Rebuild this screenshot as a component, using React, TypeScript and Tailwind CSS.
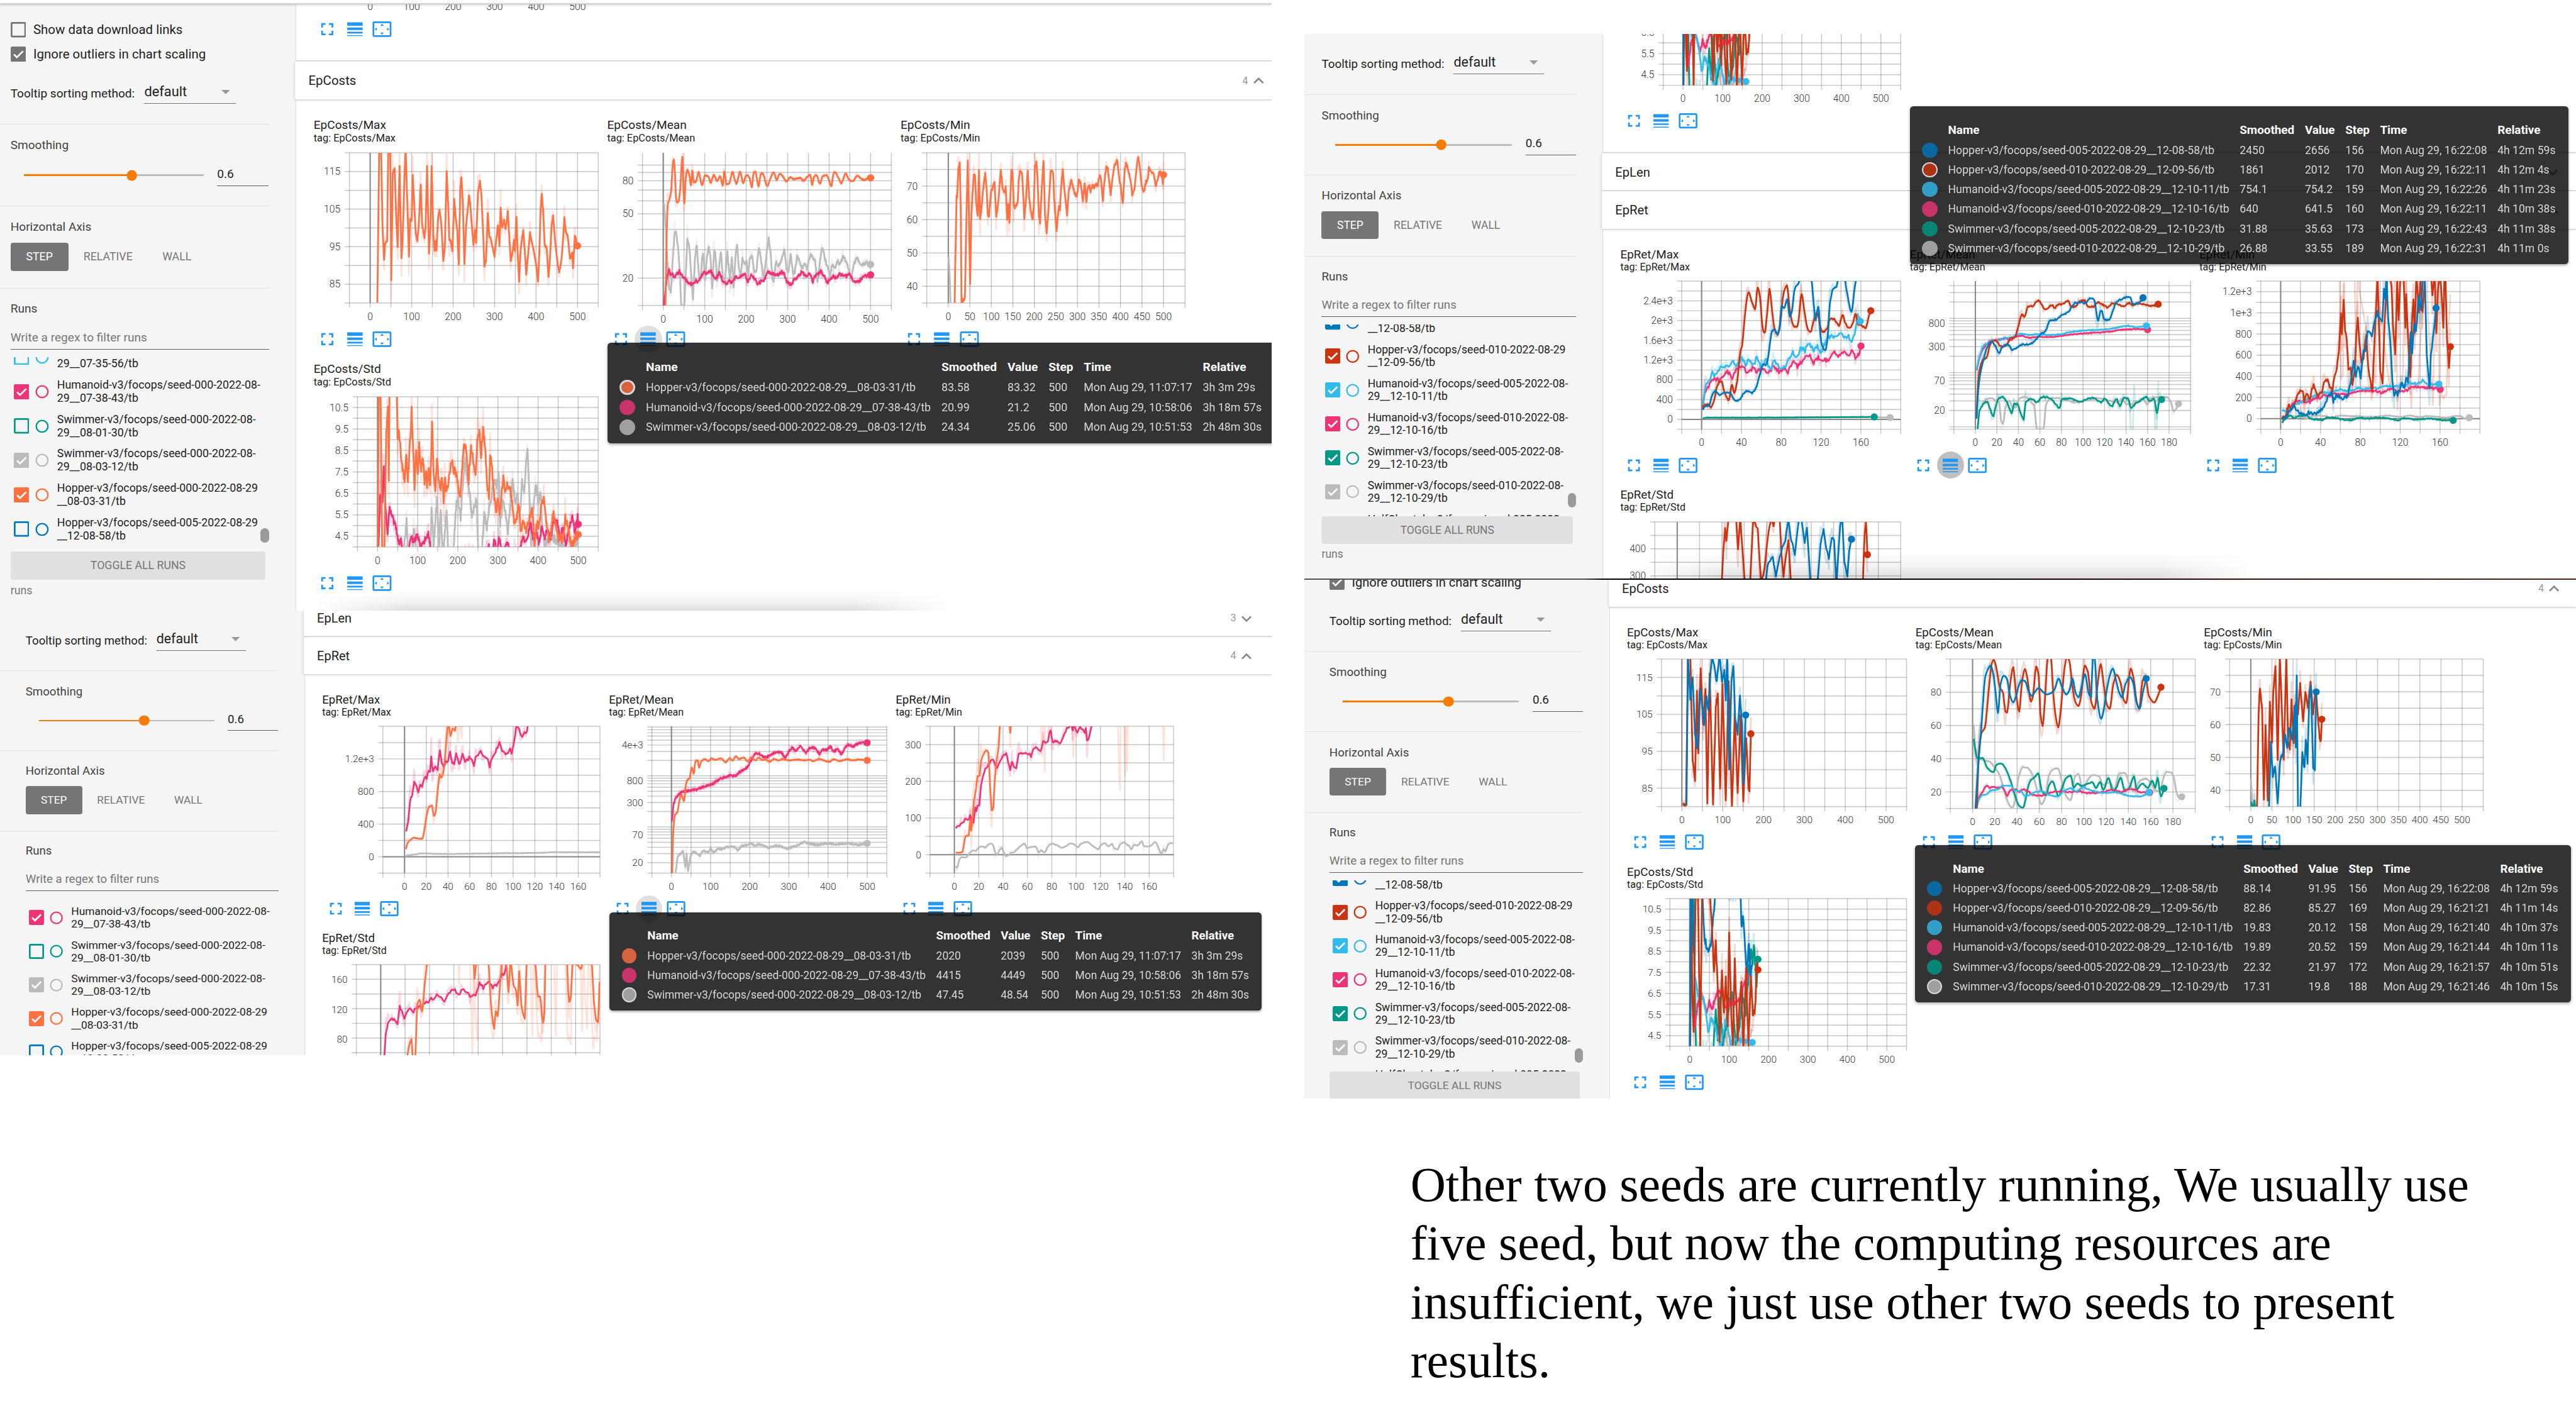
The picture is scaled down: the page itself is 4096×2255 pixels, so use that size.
import React from "react";

type Frame = [number, number, number, number];

interface Line {
  c: string;
  d: string;
  n?: number;
  dot?: boolean;
  raw?: boolean;
}

interface ChartSpec {
  title: string;
  left: number;
  bottom?: number;
  frame: Frame;
  x: [number, number];
  xGrid: number;
  xLabel: number;
  y: [number, number];
  yGrid?: number;
  log?: boolean;
  yLabels: number[];
  zero?: boolean;
  lines: Line[];
  active?: "soft" | "strong";
}

const BLUE = "#0077bb";
const RED = "#cc3311";
const CYAN = "#33bbee";
const PINK = "#ee3377";
const TEAL = "#009988";
const GREY = "#bbbbbb";
const ORANGE = "#ff7043";

const RIGHT = 331.6;

function makeRandom(seed: number) {
  let s = seed;
  return () => {
    s = (s * 1664525 + 1013904223) % 4294967296;
    return s / 4294967296 - 0.5;
  };
}

function parse(d: string): [number, number][] {
  return d.split(" ").map((p) => {
    const [x, y] = p.split(",");
    return [Number(x), Number(y)] as [number, number];
  });
}

// Monotone tangents: flat at local extremes, harmonic mean of the slopes elsewhere.
function tangents(knots: [number, number][]) {
  const slope = knots.slice(1).map(([x, y], i) => (y - knots[i][1]) / Math.max(0.5, x - knots[i][0]));
  return knots.map((_, i) => {
    if (i === 0) return slope[0];
    if (i === knots.length - 1) return slope[i - 1];
    const a = slope[i - 1];
    const b = slope[i];
    return a * b <= 0 ? 0 : (2 * a * b) / (a + b);
  });
}

// Resamples the knots once per step and derives the unsmoothed values from them.
function build(line: Line, frame: Frame, step: number) {
  const knots = parse(line.d);
  const noise = line.n ?? 0;
  const curved = noise <= 2 && !line.raw;
  const m = tangents(knots);
  const rnd = makeRandom(line.d.length * 977 + 13);
  const smooth: [number, number][] = [];
  for (let i = 0; i < knots.length - 1; i++) {
    const [x0, y0] = knots[i];
    const [x1, y1] = knots[i + 1];
    const h = x1 - x0;
    const count = Math.max(1, Math.round(h / (curved ? step * 0.8 : step)));
    for (let k = 0; k < count; k++) {
      const t = k / count;
      const base = curved
        ? (2 * t ** 3 - 3 * t ** 2 + 1) * y0 +
          (t ** 3 - 2 * t ** 2 + t) * h * m[i] +
          (3 * t ** 2 - 2 * t ** 3) * y1 +
          (t ** 3 - t ** 2) * h * m[i + 1]
        : y0 + (y1 - y0) * t;
      smooth.push([x0 + h * t, base + rnd() * noise * 2]);
    }
  }
  smooth.push(knots[knots.length - 1]);
  const raw = smooth.map(([x, y], i) => {
    const prev = i > 0 ? smooth[i - 1][1] : y;
    const delta = Math.max(-frame[3] * 0.12, Math.min(frame[3] * 0.12, 1.5 * (y - prev)));
    return [x, y + delta + rnd() * noise * 2] as [number, number];
  });
  return { smooth, raw };
}

function fmt(v: number) {
  return v >= 1000 ? `${v / 1000}e+3` : String(v);
}

const fullscreenPath =
  "M7 14H5v5h5v-2H7v-3zm-2-4h2V7h3V5H5v5zm12 7h-3v2h5v-5h-2v3zM14 5v2h3v3h2V5h-5z";
const weightPath = "M3 17h18v-2H3v2zm0 3h18v-1H3v1zm0-7h18v-3H3v3zm0-9v4h18V4H3z";
const overscanPath =
  "M12.01 5.5L10 8h4l-1.99-2.5zM18 10v4l2.5-1.99L18 10zM6 10l-2.5 2.01L6 14v-4zm8 6h-4l2.01 2.5L14 16zm7-13H3c-1.1 0-2 .9-2 2v14c0 1.1.9 2 2 2h18c1.1 0 2-.9 2-2V5c0-1.1-.9-2-2-2zm0 16.01H3V4.99h18v14.02z";

function Icon({ d }: { d: string }) {
  return (
    <svg viewBox="0 0 24 24" className="size-6 fill-[#2196f3]">
      <path d={d} />
    </svg>
  );
}

function Plot({ spec }: { spec: ChartSpec }) {
  const bottom = spec.bottom ?? 175.1;
  const { left, frame } = spec;
  const width = RIGHT - left;
  const px = (v: number) => left + ((v - spec.x[0]) / (spec.x[1] - spec.x[0])) * width;
  const f = (v: number) => (spec.log ? Math.log(v) : v);
  const py = (v: number) =>
    bottom - ((f(v) - f(spec.y[0])) / (f(spec.y[1]) - f(spec.y[0]))) * bottom;

  const xs: number[] = [];
  for (let v = spec.x[0]; v <= spec.x[1]; v += spec.xGrid) xs.push(v);
  const ys: number[] = [];
  if (spec.log) {
    for (let decade = 1; decade <= 1000; decade *= 10)
      for (let k = 1; k < 10; k++) {
        const v = k * decade;
        if (v > spec.y[0] && v <= spec.y[1]) ys.push(v);
      }
    ys.push(spec.y[0]);
  } else if (spec.yGrid) {
    for (let v = spec.y[0]; v <= spec.y[1] + 0.001; v += spec.yGrid) ys.push(v);
  }
  const xl: number[] = [];
  for (let v = 0; v < spec.x[1]; v += spec.xLabel) xl.push(v);

  const step = frame[2] / (spec.x[1] - spec.x[0]);
  const tx = (x: number) => ((x - frame[0]) / frame[2]) * width;
  const ty = (y: number) => ((y - frame[1]) / frame[3]) * bottom;
  const toPoints = (pts: [number, number][]) =>
    pts.map(([x, y]) => `${tx(x).toFixed(1)},${ty(y).toFixed(1)}`).join(" ");
  const built = spec.lines.map((l) => ({ l, ...build(l, frame, step) }));

  return (
    <svg width={342} height={205.4} className="block overflow-visible">
      {ys.map((v) => (
        <line key={`y${v}`} x1={left - 5.5} x2={RIGHT} y1={py(v)} y2={py(v)} stroke="#444" strokeOpacity={0.3} strokeWidth={1.1} />
      ))}
      {xs.map((v) => (
        <line key={`x${v}`} x1={px(v)} x2={px(v)} y1={0} y2={bottom + 5.4} stroke="#444" strokeOpacity={0.3} strokeWidth={1.1} />
      ))}
      <line x1={px(0)} x2={px(0)} y1={0} y2={bottom} stroke="#888" strokeWidth={1.5} />
      {spec.zero && <line x1={left} x2={RIGHT} y1={py(0)} y2={py(0)} stroke="#888" strokeWidth={1.5} />}
      <svg x={left} y={0} width={width} height={bottom}>
        {built.map(({ l, raw }, i) => (
          <polyline key={`r${i}`} points={toPoints(raw)} fill="none" stroke={l.c} strokeOpacity={0.2} strokeWidth={2} />
        ))}
        {built
          .filter(({ l }) => !l.raw)
          .map(({ l, smooth }, i) => (
            <polyline key={`s${i}`} points={toPoints(smooth)} fill="none" stroke={l.c} strokeWidth={2} strokeLinejoin="round" />
          ))}
      </svg>
      {built
        .filter(({ l }) => l.dot)
        .map(({ l, smooth }, i) => {
          const [x, y] = smooth[smooth.length - 1];
          return <circle key={i} cx={left + tx(x)} cy={ty(y)} r={4.2} fill={l.c} />;
        })}
      <g className="fill-[#333] font-light text-[11.6px]">
        {spec.yLabels.map((v) => (
          <text key={v} x={left - 10.5} y={py(v) + 4} textAnchor="end">
            {fmt(v)}
          </text>
        ))}
        {xl.map((v) => (
          <text key={v} x={px(v)} y={bottom + 19.8} textAnchor="middle">
            {v}
          </text>
        ))}
      </g>
    </svg>
  );
}

function Card({ spec }: { spec: ChartSpec }) {
  return (
    <div className="h-[284.4px] w-[342.3px] whitespace-nowrap text-[#212121]">
      <div className="flex h-[61.3px] flex-col pt-[20.6px]">
        <span className="text-[14px] leading-[18px]">{spec.title}</span>
        <span className="text-[12px] leading-[12px]">tag: {spec.title}</span>
      </div>
      <Plot spec={spec} />
      <div className="flex gap-2 pl-1">
        <Icon d={fullscreenPath} />
        <div
          className={
            spec.active === "soft"
              ? "-m-1 rounded-full bg-black/12 p-1"
              : spec.active === "strong"
                ? "-m-1 rounded-full bg-black/25 p-1"
                : ""
          }
        >
          <Icon d={weightPath} />
        </div>
        <Icon d={overscanPath} />
      </div>
    </div>
  );
}

function Body({ specs, className = "" }: { specs: ChartSpec[]; className?: string }) {
  return (
    <div className={`flex shrink-0 flex-col overflow-hidden border-l border-[#dcdcdc] bg-white ${className}`}>
      <div className="grid shrink-0 grid-cols-[repeat(3,342.1px)] pb-[30.8px] pl-[20.3px]">
        {specs.map((s) => (
          <Card key={s.title} spec={s} />
        ))}
      </div>
    </div>
  );
}

function Header({ name, count, open, className }: { name: string; count: number; open?: boolean; className: string }) {
  return (
    <div
      className={`relative z-10 -ml-px flex shrink-0 items-end justify-between border-b border-[#d6d6d6] bg-white pb-[11.6px] pl-4 shadow-[0_0_3px_rgba(0,0,0,0.22)] ${className}`}
    >
      <span className="text-[15px] leading-5 text-[#212121]">{name}</span>
      <span className="flex items-center text-[12px] leading-5 text-[#999]">
        {count}
        <svg viewBox="0 0 24 24" className="-my-1 size-6 fill-[#888]">
          <path d={open ? "M12 8l-6 6 1.41 1.41L12 10.83l4.59 4.58L18 14z" : "M16.59 8.59L12 13.17 7.41 8.59 6 10l6 6 6-6z"} />
        </svg>
      </span>
    </div>
  );
}

type Row = [string, string, string, string, string, string, string];

function Tooltip({ rows, near, className }: { rows: Row[]; near: number; className: string }) {
  const grid = "grid grid-cols-[30.6px_344.6px_77px_47.8px_41px_138.8px_70px] items-center pl-[14.4px]";
  return (
    <div
      className={`absolute z-20 w-[778px] rounded-[4px] bg-black/80 pt-[17px] pb-[7.1px] whitespace-nowrap text-white shadow-[0_1px_3px_rgba(0,0,0,0.35)] ${className}`}
    >
      <div className={`${grid} h-[23.3px] text-[14px] font-bold`}>
        <span />
        <span>Name</span>
        <span>Smoothed</span>
        <span>Value</span>
        <span>Step</span>
        <span>Time</span>
        <span>Relative</span>
      </div>
      {rows.map(([color, ...cells], i) => (
        <div key={i} className={`${grid} h-[23.2px] text-[13.08px] leading-[18px] opacity-80`}>
          <span
            className={`size-[18px] rounded-full ${i === near ? "border-[2.2px] border-white" : ""}`}
            style={{ backgroundColor: color }}
          />
          {cells.map((c, k) => (
            <span key={k}>{c}</span>
          ))}
        </div>
      ))}
    </div>
  );
}

function Check({ color, on }: { color: string; on?: boolean }) {
  return (
    <svg viewBox="0 0 18 18" className="size-[18px] shrink-0">
      <rect x="1" y="1" width="16" height="16" rx="1" fill={on ? color : "none"} stroke={color} strokeWidth="2" />
      {on && <path d="M3.8 9.2l3.4 3.4 7.2-7.2" fill="none" stroke="#fff" strokeWidth="2" />}
    </svg>
  );
}

interface Run {
  color: string;
  on: boolean;
  a: string;
  b: string;
}

function Sidebar({
  runs,
  width,
  pad,
  top,
  listOffset,
  thumb = true,
}: {
  runs: Run[];
  width: string;
  pad: string;
  top: string;
  listOffset: string;
  thumb?: boolean;
}) {
  return (
    <div className={`shrink-0 bg-[#f5f5f5] pr-[31px] text-[#212121] ${width}`}>
      <div className={`flex flex-col justify-end overflow-hidden border-b border-[#e0e0e0] ${pad} ${top}`}>
        <div className="mb-[10.3px] flex shrink-0 items-center gap-[8.6px] text-[15px] leading-[18px]">
          <Check color="#757575" />
          Show data download links
        </div>
        <div className="mb-[19.2px] flex shrink-0 items-center gap-[8.6px] text-[15px] leading-[18px]">
          <Check color="#757575" on />
          Ignore outliers in chart scaling
        </div>
        <div className="mb-[23.4px] flex shrink-0 items-end gap-[11px]">
          <span className="w-[145px] pb-[3.9px] text-[14px] leading-[16px] whitespace-nowrap">Tooltip sorting method:</span>
          <div className="flex h-[30px] w-[106.5px] items-center justify-between border-b border-[#757575] pt-[2.6px] pr-[7px] text-[16px]">
            default
            <svg viewBox="0 0 10 5" className="h-[5px] w-[10px] fill-[#999]">
              <path d="M0 0h10L5 5z" />
            </svg>
          </div>
        </div>
      </div>

      <div className={`h-[95px] border-b border-[#e0e0e0] pt-[15.4px] ${pad}`}>
        <div className="text-[14px] leading-[18px] text-[#424242]">Smoothing</div>
        <div className="mt-[11px] flex h-[27px] items-end gap-[16px] pl-[16px]">
          <div className="relative mb-[11.3px] h-[2.2px] w-[209px] bg-[#bdbdbd]">
            <div className="h-full w-[60%] bg-[#f57c00]" />
            <div className="absolute top-1/2 left-[60%] size-[12.4px] -translate-1/2 rounded-full bg-[#f57c00]" />
          </div>
          <div className="h-[24px] w-[60px] border-b border-[#616161] text-[14px] leading-[20.6px]">0.6</div>
        </div>
      </div>

      <div className={`h-[96.3px] border-b border-[#e0e0e0] pt-[15.4px] ${pad}`}>
        <div className="text-[14px] leading-[18px] text-[#424242]">Horizontal Axis</div>
        <div className="mt-[9px] flex h-[33.2px] text-[13px] leading-[33.2px] text-[#757575]">
          <span className="w-[67.5px] rounded-[3px] bg-[#757575] text-center text-white">STEP</span>
          <span className="w-[92.5px] text-center">RELATIVE</span>
          <span className="w-[68px] text-center">WALL</span>
        </div>
      </div>

      <div className={`pt-[14.3px] ${pad}`}>
        <div className="text-[14px] leading-[18px] text-[#424242]">Runs</div>
        <div className="mt-[12px] h-[26.5px] border-b border-[#616161] text-[14px] leading-[25.6px] text-[#757575]">
          Write a regex to filter runs
        </div>
        <div className="relative mt-[9px] h-[226.7px] overflow-hidden">
          <div className={listOffset}>
            {runs.map((r) => (
              <div key={r.a + r.b} className="flex h-[40.1px] items-center pl-[3.8px]">
                <Check color={r.color} on={r.on} />
                <svg viewBox="0 0 16 16" className="ml-[7px] size-4 shrink-0">
                  <circle cx="8" cy="8" r="6.8" fill="none" stroke={r.color} strokeWidth="1.7" />
                </svg>
                <div className="ml-[9.6px] text-[13.05px] leading-[15.2px] whitespace-nowrap">
                  {r.a}
                  <br />
                  {r.b}
                </div>
              </div>
            ))}
          </div>
          {thumb && <div className="absolute top-[199.5px] right-0 h-[17px] w-[10px] rounded-[5px] bg-[#9a9a9a]" />}
        </div>
        <div className="mr-[4px] h-[33px] rounded-[3px] bg-[#e0e0e0] text-center text-[13px] leading-[33px] text-[#757575]">
          TOGGLE ALL RUNS
        </div>
        <div className="mt-[4.6px] text-[13px] leading-[16px] text-[#757575]">runs</div>
      </div>
    </div>
  );
}

const seed000: Run[] = [
  { color: CYAN, on: false, a: "Humanoid-v3/focops/seed-000-2022-08-", b: "29__07-35-56/tb" },
  { color: PINK, on: true, a: "Humanoid-v3/focops/seed-000-2022-08-", b: "29__07-38-43/tb" },
  { color: TEAL, on: false, a: "Swimmer-v3/focops/seed-000-2022-08-", b: "29__08-01-30/tb" },
  { color: GREY, on: true, a: "Swimmer-v3/focops/seed-000-2022-08-", b: "29__08-03-12/tb" },
  { color: ORANGE, on: true, a: "Hopper-v3/focops/seed-000-2022-08-29", b: "__08-03-31/tb" },
  { color: BLUE, on: false, a: "Hopper-v3/focops/seed-005-2022-08-29", b: "__12-08-58/tb" },
];

const seed005: Run[] = [
  { color: BLUE, on: true, a: "Hopper-v3/focops/seed-005-2022-08-29", b: "__12-08-58/tb" },
  { color: RED, on: true, a: "Hopper-v3/focops/seed-010-2022-08-29", b: "__12-09-56/tb" },
  { color: CYAN, on: true, a: "Humanoid-v3/focops/seed-005-2022-08-", b: "29__12-10-11/tb" },
  { color: PINK, on: true, a: "Humanoid-v3/focops/seed-010-2022-08-", b: "29__12-10-16/tb" },
  { color: TEAL, on: true, a: "Swimmer-v3/focops/seed-005-2022-08-", b: "29__12-10-23/tb" },
  { color: GREY, on: true, a: "Swimmer-v3/focops/seed-010-2022-08-", b: "29__12-10-29/tb" },
  { color: "#f5f5f5", on: false, a: "HalfCheetah-v3/focops/seed-005-2022-", b: "08-29__12-10-40/tb" },
];

const R500: [number, number] = [-50, 550];

const prevA: ChartSpec[] = [
  { title: "AdvCosts/Std", left: 41.5, frame: [0, 0, 1, 1], x: R500, xGrid: 50, xLabel: 100, y: [0, 10], yLabels: [], lines: [] },
];

const chartsA: ChartSpec[] = [
  {
    title: "EpCosts/Max", left: 41.5, frame: [138, 672, 660, 662], x: R500, xGrid: 50, xLabel: 100,
    y: [80, 120], yGrid: 5, yLabels: [85, 95, 105, 115],
    lines: [
      { c: ORANGE, dot: true, n: 5, d: "212,1334 217,660 222,660 226,1000 230,1147 233,1068 238,1060 241,660 246,660 249,1230 253,760 258,741 262,950 266,1088 271,735 276,1141 279,1060 284,780 287,650 290,810 296,1130 299,965 303,970 306,773 310,900 314,1030 318,1060 322,990 327,815 331,990 337,1047 340,1000 344,735 349,1113 353,1000 356,728 361,1050 364,1105 367,1060 369,1105 373,960 377,922 382,990 387,1150 391,1090 396,756 400,900 403,1055 407,1060 411,1110 416,880 420,960 424,1010 428,1168 432,830 435,775 439,900 443,1160 448,980 452,920 455,857 459,910 463,1000 467,1075 471,1010 474,1065 479,850 484,800 488,850 493,1040 496,1175 500,1150 505,940 509,1040 513,1050 518,1090 523,1130 527,1060 532,990 536,1080 539,917 543,1000 548,970 552,1010 556,960 558,925 562,1040 566,1150 570,1120 575,1050 577,1110 581,953 584,1100 588,1240 592,1100 599,1010 603,1100 607,1205 611,1140 617,1025 622,1070 628,1110 634,1170 638,1243 642,1100 645,930 648,850 652,930 656,1080 661,1090 666,1220 670,1140 674,1000 678,950 683,1050 688,1130 694,1200 700,1150 705,1050 708,958 712,1020 717,1040 723,1140 729,1110 731,1183 736,1035 740,1060 743,1082" },
    ],
  },
  {
    title: "EpCosts/Mean", left: 41.5, bottom: 178, frame: [914, 672, 660, 673], x: R500, xGrid: 50, xLabel: 100,
    y: [13.55, 119], log: true, yLabels: [20, 50, 80], active: "soft",
    lines: [
      { c: GREY, dot: true, n: 8, d: "971,890 976,1010 980,1150 985,1270 989,1290 994,1150 999,1030 1003,1025 1008,1080 1013,1200 1017,1345 1025,1345 1029,1200 1033,1057 1038,1080 1043,1200 1048,1320 1053,1150 1058,1075 1063,1200 1068,1240 1072,1140 1075,1120 1080,1230 1085,1130 1090,1080 1095,1150 1099,1270 1104,1110 1107,1110 1112,1240 1118,1160 1122,1105 1127,1220 1132,1250 1139,1105 1146,1240 1151,1130 1156,1270 1161,1120 1165,1075 1170,1190 1175,1210 1179,1140 1185,1165 1190,1150 1194,1220 1199,1130 1205,1130 1210,1190 1216,1200 1220,1120 1224,1090 1228,1140 1234,1220 1239,1180 1244,1100 1249,1050 1254,1110 1258,1220 1262,1235 1268,1150 1275,1170 1282,1150 1290,1095 1296,1180 1301,1200 1307,1115 1313,1200 1318,1200 1324,1130 1330,1150 1337,1180 1345,1160 1350,1185 1360,1120 1367,1140 1372,1150 1378,1240 1385,1140 1391,1090 1398,1140 1405,1180 1411,1210 1418,1160 1422,1185 1432,1150 1437,1165 1446,1130 1455,1150 1464,1210 1468,1225 1475,1160 1483,1132 1492,1165 1500,1165 1508,1155 1514,1160 1519,1164" },
      { c: PINK, dot: true, n: 7, d: "971,1345 976,1260 980,1220 984,1182 988,1210 993,1205 998,1220 1004,1210 1012,1195 1020,1215 1028,1230 1036,1245 1046,1252 1055,1235 1062,1240 1070,1215 1078,1195 1085,1205 1095,1190 1103,1220 1110,1225 1119,1198 1127,1240 1136,1250 1143,1238 1152,1245 1160,1220 1170,1222 1178,1215 1185,1200 1193,1240 1202,1215 1210,1225 1220,1250 1228,1240 1236,1235 1247,1195 1255,1205 1265,1208 1275,1210 1283,1195 1290,1205 1297,1240 1308,1255 1315,1235 1325,1220 1335,1200 1342,1205 1350,1215 1358,1205 1366,1240 1372,1215 1380,1205 1387,1195 1396,1215 1404,1245 1411,1230 1420,1215 1428,1225 1437,1205 1447,1215 1455,1215 1463,1200 1472,1235 1480,1240 1490,1235 1500,1220 1508,1213 1519,1210" },
      { c: ORANGE, dot: true, n: 2, d: "975,1345 978,1050 981,900 985,880 990,840 994,730 997,703 1000,760 1003,870 1006,890 1010,885 1014,830 1018,720 1020,690 1022,800 1025,895 1028,800 1033,748 1038,770 1043,815 1046,750 1050,800 1055,800 1063,758 1068,790 1072,815 1080,772 1088,775 1095,803 1103,770 1112,795 1120,775 1127,815 1131,755 1137,810 1144,805 1153,757 1159,790 1163,808 1173,757 1181,805 1190,770 1197,780 1204,822 1209,760 1213,755 1222,818 1228,765 1232,762 1245,818 1252,790 1262,758 1270,792 1278,765 1287,778 1296,798 1306,780 1315,788 1325,785 1333,783 1341,795 1350,780 1359,770 1364,812 1369,780 1375,770 1385,808 1392,775 1402,770 1408,790 1415,820 1420,770 1424,757 1433,780 1441,806 1453,765 1462,790 1471,798 1484,773 1493,785 1502,792 1511,785 1519,782" },
    ],
  },
  {
    title: "EpCosts/Min", left: 30.5, frame: [336, 202, 900, 661], x: R500, xGrid: 50, xLabel: 50,
    y: [35, 80], yGrid: 5, yLabels: [40, 50, 60, 70],
    lines: [
      { c: GREY, d: "412,660 415,720 419,863" },
      { c: ORANGE, dot: true, n: 7, d: "433,863 437,600 440,395 442,400 446,280 451,238 455,500 457,863 463,850 469,840 474,500 479,242 484,560 487,775 491,500 495,390 500,300 504,300 508,420 514,480 518,275 522,490 527,440 532,370 540,290 545,370 549,480 553,480 560,370 566,355 572,330 578,485 585,420 594,280 600,350 606,380 611,355 616,490 620,430 624,507 631,280 635,290 639,430 643,445 648,430 653,420 656,330 661,280 668,295 672,380 676,490 680,440 688,278 693,400 699,460 705,490 709,440 713,260 718,240 722,310 727,480 731,515 735,400 743,232 748,470 754,555 759,470 768,285 776,285 780,400 788,550 792,490 797,435 800,450 805,340 810,278 817,380 825,480 831,370 840,322 845,350 852,385 860,390 866,315 873,340 880,410 886,335 892,415 897,355 903,350 907,370 914,345 920,355 927,335 931,350 935,320 941,298 950,410 955,330 962,262 967,270 977,388 984,300 990,260 1000,235 1006,310 1012,350 1019,426 1026,280 1030,248 1035,260 1040,290 1046,320 1052,388 1060,360 1067,270 1073,217 1079,270 1085,350 1092,380 1100,330 1106,320 1110,270 1116,280 1122,290 1128,300 1134,345 1139,325 1146,290 1150,290 1155,300 1159,335 1161,299" },
    ],
  },
  {
    title: "EpCosts/Std", left: 50.9, frame: [146.5, 326, 580, 759], x: R500, xGrid: 50, xLabel: 100,
    y: [4, 11], yGrid: 0.5, yLabels: [4.5, 5.5, 6.5, 7.5, 8.5, 9.5, 10.5],
    lines: [
      { c: GREY, n: 24, d: "215,1120 236,1120 258,1120 265,950 268,1120 278,1120 283,990 288,1120 322,1120 325,900 330,1085 338,850 343,1085 347,890 352,1120 361,900 365,1120 377,1120 383,900 388,840 395,930 400,780 405,640 410,720 417,820 422,930 430,850 434,870 438,1120 446,1120 452,910 458,1000 465,860 470,820 476,750 480,780 487,720 490,980 496,850 503,900 508,1020 514,900 520,760 526,850 532,830 538,920 543,750 548,800 553,650 556,605 560,800 565,1085 572,830 577,780 582,850 588,820 592,1000 598,1085 610,1020 630,1060 650,1120 678,1060" },
      { c: PINK, dot: true, n: 16, d: "197,1085 201,830 207,850 210,670 214,900 219,1020 223,890 230,930 238,980 242,1020 246,1070 251,1040 256,1120 268,1120 274,1030 282,1060 291,1020 298,1085 308,1050 318,1020 325,1120 455,1120 462,1080 470,1120 476,1045 482,1110 488,1040 494,1110 508,1070 515,1110 537,1100 545,1030 550,1060 557,1020 564,960 570,1060 577,1010 584,1070 590,980 597,1040 603,1000 612,1040 618,960 628,960 634,1040 641,990 648,1070 656,1000 664,930 671,1020 677,920 678,970" },
      { c: ORANGE, dot: true, n: 22, d: "195,1085 198,300 202,300 206,1120 211,1120 216,500 220,360 222,770 224,200 240,200 243,530 247,500 252,640 256,700 260,750 264,600 268,750 272,600 277,395 281,590 284,790 288,590 292,735 295,570 300,690 304,630 308,750 312,700 314,780 318,680 322,790 326,437 330,700 334,820 338,640 342,750 346,790 350,740 354,850 357,750 361,820 367,740 373,640 378,700 384,710 389,770 394,850 398,700 403,555 408,580 414,750 420,570 426,650 431,720 435,550 440,500 444,620 449,500 454,570 458,750 463,830 466,620 471,700 476,830 480,900 485,850 489,930 494,800 498,740 502,820 508,770 513,770 518,850 523,950 529,960 534,850 540,1010 545,950 551,1010 557,960 562,940 567,890 573,1080 578,970 584,980 590,860 596,850 601,960 607,1050 612,1020 618,910 624,980 630,1050 636,1030 641,1060 647,940 654,990 660,1070 666,1075 672,1040 678,1022" },
    ],
  },
];

const chartsB: ChartSpec[] = [
  {
    title: "EpRet/Max", left: 72.6, frame: [229, 432, 575, 508], x: [-20, 180], xGrid: 20, xLabel: 20,
    y: [-200, 1600], yGrid: 200, yLabels: [0, 400, 800, 1200], zero: true,
    lines: [
      { c: GREY, n: 0.6, d: "290,883 295,878 315,876 330,872 400,874 500,872 650,870 680,868 804,868" },
      { c: PINK, n: 5, d: "291,795 296,760 301,690 306,670 312,628 318,640 323,660 328,635 333,645 340,605 345,610 350,590 354,590 357,540 362,590 368,570 374,580 380,515 385,560 390,570 396,555 402,550 407,522 413,560 418,562 423,525 428,550 433,565 440,530 447,552 452,550 458,540 464,545 470,565 475,535 481,530 488,517 495,540 501,542 507,550 512,570 518,540 525,530 530,510 538,490 545,520 551,520 557,530 563,515 566,505 570,530 575,500 580,460 583,420 590,445 598,470 604,455 611,450 615,400" },
      { c: ORANGE, n: 1, d: "290,857 295,835 303,825 312,817 320,820 333,822 338,800 345,740 351,712 359,707 364,742 368,735 374,660 380,598 383,610 388,600 393,550 400,440 403,420 408,465 414,440 420,447 424,400" },
      { c: ORANGE, raw: true, d: "424,420 428,447 433,420 438,452 442,420" },
    ],
  },
  {
    title: "EpRet/Mean", left: 51.4, frame: [942, 432, 623, 508], x: R500, xGrid: 50, xLabel: 100,
    y: [12.5, 9330], log: true, yLabels: [20, 70, 300, 800, 4000], active: "soft",
    lines: [
      { c: GREY, dot: true, n: 3, d: "1005,940 1010,885 1018,873 1025,865 1031,920 1034,875 1038,935 1044,885 1052,865 1060,870 1070,880 1078,862 1090,870 1098,855 1106,870 1118,855 1130,858 1140,850 1150,848 1160,848 1170,862 1180,847 1195,842 1205,838 1215,845 1225,840 1240,845 1250,853 1270,845 1285,848 1300,856 1320,848 1335,840 1345,832 1355,837 1380,843 1400,838 1430,840 1460,837 1490,842 1513,837" },
      { c: PINK, dot: true, n: 4, d: "995,765 1000,700 1005,682 1012,670 1020,662 1030,657 1045,653 1060,652 1075,643 1090,637 1105,630 1120,615 1135,608 1150,603 1165,603 1175,590 1187,582 1198,570 1205,550 1215,527 1228,528 1240,540 1255,535 1265,525 1280,522 1288,525 1295,545 1305,520 1315,505 1322,518 1338,500 1350,525 1362,505 1375,507 1387,528 1395,510 1405,515 1415,502 1425,520 1435,510 1445,530 1455,505 1463,495 1475,503 1485,495 1495,487 1505,490 1513,489" },
      { c: ORANGE, dot: true, n: 1, d: "996,940 998,820 1003,740 1010,728 1015,690 1020,668 1027,690 1033,630 1037,617 1042,612 1048,575 1053,595 1058,553 1064,550 1067,575 1073,555 1083,545 1092,553 1100,543 1110,548 1125,543 1138,557 1148,543 1156,550 1165,536 1173,545 1186,540 1196,553 1206,540 1217,550 1225,540 1235,548 1244,547 1254,555 1266,545 1278,550 1290,545 1305,550 1330,547 1345,550 1360,548 1370,553 1385,545 1398,550 1412,555 1425,546 1440,552 1460,546 1475,550 1490,547 1513,550" },
    ],
  },
  {
    title: "EpRet/Min", left: 41.1, frame: [352, 222, 850, 660], x: [-20, 180], xGrid: 20, xLabel: 20,
    y: [-50, 350], yGrid: 50, yLabels: [0, 100, 200, 300], zero: true,
    lines: [
      { c: GREY, n: 1, d: "442,850 446,860 455,820 465,810 478,812 490,793 505,780 512,783 520,770 535,762 545,768 555,755 565,750 573,758 580,790 587,798 594,780 602,768 610,790 617,805 628,802 634,790 645,788 660,770 683,750 690,770 705,765 718,762 725,770 730,790 740,780 752,790 763,765 778,750 795,757 815,768 828,760 845,748 857,755 868,765 880,750 900,742 915,755 930,768 940,775 948,758 962,748 975,762 988,750 994,770 1008,775 1015,755 1030,743 1040,755 1048,760 1054,775 1065,755 1075,758 1092,740 1098,760 1112,763 1125,758 1138,742 1150,770 1160,795 1168,775 1173,785 1183,755 1192,747 1201,748" },
      { c: PINK, n: 5, d: "442,679 455,670 465,657 475,640 485,645 492,620 497,640 504,655 510,590 514,605 518,575 524,580 530,490 536,455 545,415 553,405 560,385 572,370 580,400 586,405 592,395 605,355 618,345 625,380 632,415 638,385 645,405 653,408 662,345 670,340 678,345 686,342 692,350 700,340 705,365 713,320 726,318 732,330 738,335 747,288 755,292 764,290 769,245 773,243 780,290 788,288 800,290 806,298 816,268 830,232 845,215 850,240 855,210 866,255 876,220 885,240 892,250 896,235 900,290 908,265 917,215" },
      { c: ORANGE, n: 1, d: "442,791 459,790 466,786 473,730 479,713 487,714 493,640 496,692 500,640 505,560 513,500 518,445 525,445 530,380 540,345 548,330 556,343 562,500 567,600 573,590 578,470 584,380 592,310 596,215 629,205 632,252 635,205" },
      { c: ORANGE, raw: true, d: "738,205 743,280 748,205 752,350 755,205" },
      { c: ORANGE, raw: true, d: "848,205 852,285 857,205" },
      { c: ORANGE, raw: true, d: "1008,205 1015,433 1018,205" },
      { c: ORANGE, raw: true, d: "1029,205 1033,370 1036,205 1040,342 1043,205" },
      { c: ORANGE, raw: true, d: "1165,205 1168,300 1171,205" },
    ],
  },
  {
    title: "EpRet/Std", left: 41, frame: [159, 1242, 645, 498], x: [-20, 180], xGrid: 20, xLabel: 20,
    y: [-16, 180], yLabels: [80, 120, 160], yGrid: 19.6,
    lines: [
      { c: PINK, n: 5, d: "233,1560 237,1480 243,1440 250,1427 262,1428 268,1442 274,1380 279,1400 286,1422 295,1400 302,1390 310,1400 318,1390 325,1385 332,1390 340,1370 350,1372 357,1358 363,1362 372,1345 380,1348 385,1355 392,1365 400,1345 410,1330 420,1330 430,1348 440,1325 452,1335 460,1348 475,1345 485,1305 495,1320 508,1298 520,1320 530,1310 538,1300 545,1270 550,1280 557,1235" },
      { c: ORANGE, n: 2, d: "293,1555 305,1495 308,1550 315,1560 320,1380 326,1360 333,1400 340,1310 348,1230 468,1200 472,1290 477,1230 508,1230 515,1370 524,1458 528,1400 533,1415 540,1300 545,1230 555,1230 562,1335 567,1230 575,1310 582,1330 586,1380 590,1265 596,1380 605,1425 610,1230 632,1230 640,1350 645,1350 653,1440 657,1400 660,1200 715,1200 722,1370 727,1350 732,1230 755,1255 758,1230 782,1230 788,1370 796,1436 799,1436 803,1300" },
      { c: ORANGE, raw: true, d: "428,1200 431,1250 434,1200 460,1200 466,1495 470,1300 480,1440 484,1200 620,1200 625,1425 630,1200 640,1430 650,1480 655,1400 662,1200 682,1200 687,1425 693,1200 712,1200 718,1440 727,1490 732,1200 752,1200 757,1410 760,1200 770,1400 776,1200 786,1470 796,1490 803,1420" },
    ],
  },
];

const epCostStd: ChartSpec = {
  title: "EpCosts/Std", left: 51, frame: [787, 966, 500, 433], x: R500, xGrid: 50, xLabel: 100,
  y: [4, 11], yGrid: 0.5, yLabels: [4.5, 5.5, 6.5, 7.5, 8.5, 9.5, 10.5],
  lines: [
    { c: GREY, n: 12, d: "900,1420 905,1350 908,1400 935,1400 940,1340 945,1400 960,1350" },
    { c: TEAL, dot: true, n: 14, d: "830,1300 832,940 836,940 838,1100 842,1420 878,1420 884,1290 888,1370 893,1250 898,1390 905,1340 912,1270 920,1250 925,1390 935,1330 940,1250 947,1310 953,1190 958,1120 962,1160 965,1100 970,1230 973,1144" },
    { c: PINK, n: 7, d: "835,1250 840,1340 845,1280 852,1240 858,1265 865,1300 870,1270 876,1290 884,1250 890,1240 897,1245 905,1290 915,1270 925,1275 935,1260 945,1210 953,1190" },
    { c: CYAN, dot: true, n: 7, d: "840,1200 848,1260 856,1250 862,1290 868,1360 873,1320 880,1330 886,1360 894,1400 905,1320 915,1390 930,1380 961,1388" },
    { c: BLUE, n: 10, d: "829,1400 831,940 834,960 837,1130 842,940 855,940 860,1080 867,1120 873,1100 878,1030 884,940 936,940 938,1050 942,1020 946,1120 950,1180 954,1090 957,1195 960,1160" },
    { c: RED, dot: true, n: 12, d: "830,1400 832,940 834,1240 837,1360 841,960 846,940 851,1395 855,940 872,960 876,1050 880,1180 884,1090 888,1230 892,1390 897,1180 901,1300 905,1200 909,1340 912,1055 916,1280 920,1390 924,1150 930,1380 934,1280 938,1210 942,1400 948,1180 953,1400 958,1200 962,1300 967,1290 971,1140 973,1175" },
    { c: BLUE, n: 6, d: "829,1410 831,940 834,960 836,1100 838,1090" },
  ],
};

const chartsC: ChartSpec[] = [
  {
    title: "EpRet/Max", left: 72.8, frame: [231, 718, 579, 420], x: [-20, 200], xGrid: 20, xLabel: 40,
    y: [-200, 2800], yGrid: 200, yLabels: [0, 400, 800, 1200, 1600, 2000, 2400], zero: true,
    lines: [
      { c: GREY, dot: true, d: "287,1107 740,1104 782,1105" },
      { c: TEAL, dot: true, n: 0.4, d: "287,1107 300,1105 400,1105 600,1104 740,1103" },
      { c: PINK, dot: true, n: 6, d: "286,1070 292,1040 300,1020 310,1000 320,995 330,1000 340,985 352,975 365,990 378,965 390,960 405,975 418,965 430,975 445,965 460,975 475,960 488,975 500,965 512,975 525,945 537,960 550,945 568,925 580,950 592,935 605,940 620,945 635,920 645,935 660,915 672,930 683,915 690,935 700,925 705,902" },
      { c: CYAN, dot: true, n: 7, d: "287,1075 291,1035 296,1010 305,995 312,980 322,985 335,965 350,962 365,945 375,955 390,935 400,955 410,940 420,960 430,935 440,960 455,940 465,970 475,945 488,960 500,965 512,945 525,920 535,935 545,910 557,915 567,890 578,915 590,905 600,920 612,890 625,870 637,880 650,860 660,885 670,870 680,895 688,870 696,810 703,832" },
      { c: RED, dot: true, n: 2, d: "285,1078 292,1070 300,1068 308,1075 316,1060 324,1020 332,1003 337,1002 343,1030 350,1048 356,1055 364,1010 370,1035 378,1000 382,960 386,920 391,900 396,840 404,765 408,748 416,775 425,798 432,735 438,760 445,850 450,865 458,800 463,740 470,800 476,850 485,870 492,835 500,755 509,730 517,800 525,840 535,850 540,830 548,755 555,800 563,850 572,863 580,830 590,808 598,850 606,862 616,850 623,825 632,825 640,835 647,845 656,815 665,840 675,852 683,840 690,812 698,840 705,842 712,848 718,850 725,820 731,802" },
      { c: BLUE, n: 2, d: "287,1082 295,1072 303,1070 312,1040 320,1030 330,1040 345,1035 355,1033 365,1045 375,1058 385,1055 395,1035 405,1030 417,1035 428,1020 436,990 447,955 455,955 464,900 470,860 478,855 484,870 490,850 495,790 502,795 510,770 517,820 522,805 530,740 540,725 547,700 572,700 580,780 585,830 592,790 600,890 610,915 617,880 623,780 632,740 640,735 647,700 660,700 668,750 680,805 688,740 694,700" },
    ],
  },
  {
    title: "EpRet/Mean", left: 51.8, frame: [950, 718, 627, 418], x: [-20, 200], xGrid: 20, xLabel: 20,
    y: [9, 4870], log: true, yLabels: [20, 70, 300, 800], active: "strong",
    lines: [
      { c: GREY, dot: true, n: 1, d: "1025,1065 1035,1052 1050,1048 1060,1055 1070,1060 1075,1110 1080,1120 1087,1075 1097,1055 1105,1075 1115,1075 1122,1050 1140,1045 1155,1060 1163,1070 1170,1136 1187,1136 1195,1065 1210,1048 1240,1050 1270,1060 1300,1055 1330,1048 1360,1055 1385,1060 1395,1050 1407,1065 1420,1065 1435,1060 1450,1050 1462,1065 1470,1050 1490,1045 1515,1045 1525,1060 1532,1085 1538,1080 1545,1064" },
      { c: TEAL, dot: true, n: 2, d: "1013,1136 1018,1085 1025,1070 1038,1058 1045,1075 1055,1098 1060,1075 1068,1050 1080,1045 1088,1055 1095,1070 1103,1090 1110,1065 1118,1065 1125,1085 1135,1108 1140,1060 1155,1050 1170,1060 1185,1045 1205,1048 1220,1065 1230,1075 1237,1050 1260,1050 1285,1060 1300,1052 1320,1048 1340,1060 1350,1050 1368,1072 1380,1050 1390,1070 1400,1048 1410,1048 1420,1075 1430,1065 1445,1055 1460,1045 1470,1058 1480,1050 1488,1090 1495,1052 1500,1052" },
      { c: TEAL, raw: true, d: "1415,1050 1423,1140 1427,1060 1480,1045 1486,1140 1492,1050" },
      { c: PINK, dot: true, n: 1, d: "1010,970 1018,935 1030,905 1045,890 1060,885 1075,882 1090,880 1100,885 1115,875 1130,872 1150,878 1175,875 1200,876 1250,870 1300,865 1350,862 1400,855 1440,853 1463,855" },
      { c: CYAN, dot: true, n: 1, d: "1010,970 1020,925 1030,898 1042,895 1055,885 1070,885 1085,878 1100,878 1115,870 1130,867 1150,870 1170,868 1200,870 1230,868 1260,862 1300,857 1340,855 1380,850 1410,844 1435,848 1460,844" },
      { c: RED, dot: true, n: 2, d: "1010,1100 1015,1000 1022,950 1030,938 1037,935 1045,900 1052,888 1060,884 1068,895 1080,905 1090,898 1100,880 1112,875 1120,850 1130,812 1137,818 1146,790 1160,788 1172,773 1180,778 1190,798 1200,793 1210,785 1217,795 1225,785 1240,783 1252,773 1262,792 1272,790 1283,775 1297,773 1305,790 1320,790 1330,778 1345,785 1358,792 1370,780 1382,783 1400,790 1412,780 1425,785 1440,780 1455,785 1475,788 1491,783" },
      { c: BLUE, dot: true, n: 2, d: "1010,1108 1015,1020 1021,975 1030,935 1038,905 1050,890 1060,900 1070,920 1078,905 1092,897 1105,912 1118,905 1132,897 1150,897 1165,885 1180,868 1192,860 1205,830 1225,825 1235,815 1250,808 1262,792 1272,780 1285,778 1297,780 1312,766 1322,772 1332,828 1340,800 1350,828 1362,825 1372,800 1380,778 1392,770 1415,762 1425,783 1440,780 1451,765" },
    ],
  },
  {
    title: "EpRet/Min", left: 72.6, frame: [450, 727, 779, 587], x: [-20, 200], xGrid: 20, xLabel: 40,
    y: [-100, 1300], yGrid: 100, yLabels: [0, 200, 400, 600, 800, 1000, 1200], zero: true,
    lines: [
      { c: GREY, dot: true, n: 1, d: "550,1262 565,1262 590,1265 615,1270 640,1260 680,1262 700,1268 730,1260 770,1262 800,1262 820,1265 850,1265 900,1260 950,1265 980,1260 1010,1265 1040,1262 1080,1265 1110,1268 1140,1262 1160,1262 1175,1272 1191,1268" },
      { c: TEAL, dot: true, n: 2, d: "526,1287 540,1270 555,1260 570,1270 585,1262 600,1260 615,1260 625,1270 640,1276 655,1275 670,1278 685,1268 700,1268 720,1270 735,1275 770,1278 800,1268 830,1272 860,1268 900,1270 940,1278 960,1270 1000,1275 1050,1272 1100,1278 1134,1279" },
      { c: PINK, dot: true, n: 5, d: "540,1235 555,1225 570,1205 600,1205 625,1205 640,1190 660,1190 670,1180 695,1180 715,1175 740,1175 760,1180 775,1168 800,1165 815,1160 835,1165 860,1162 880,1170 900,1160 915,1155 930,1160 960,1165 985,1150 1005,1145 1030,1150 1060,1150 1088,1156" },
      { c: CYAN, dot: true, n: 4, d: "526,1242 550,1240 560,1225 575,1212 600,1207 612,1200 630,1185 650,1180 665,1170 680,1168 700,1170 720,1160 735,1155 750,1162 775,1160 800,1150 820,1155 845,1150 870,1152 895,1140 920,1145 945,1140 965,1140 985,1130 1005,1135 1025,1120 1045,1140 1060,1135 1083,1135" },
      { c: RED, dot: true, n: 7, d: "526,1271 535,1265 542,1245 550,1215 560,1240 570,1215 580,1180 590,1165 600,1170 605,1200 613,1175 625,1200 632,1155 638,1140 645,1165 652,1190 658,1170 668,1170 675,1125 688,1120 695,1145 705,1165 712,1100 720,1080 728,1000 735,860 738,945 745,800 750,920 756,960 762,1080 770,1070 776,1140 784,1080 790,940 795,870 800,960 808,1050 815,1030 825,940 832,1070 840,1120 847,1170 855,950 865,700 875,1080 883,1130 890,900 900,700 905,700 915,740 920,900 928,1020 935,720 940,880 947,700 958,720 964,910 967,780 975,980 982,1110 987,900 993,800 997,930 1003,700 1012,850 1018,720 1025,850 1035,700 1055,700 1060,780 1068,700 1074,940 1080,760 1088,700 1095,820 1099,910 1103,700 1107,720 1112,950 1119,1075 1124,987" },
      { c: BLUE, dot: true, n: 8, d: "526,1271 540,1268 550,1240 567,1225 575,1235 590,1250 605,1253 620,1247 640,1250 655,1248 668,1230 680,1210 692,1175 702,1170 708,1205 718,1180 730,1185 745,1190 758,1185 765,1150 773,1100 780,1050 788,1110 795,1060 805,1110 815,1000 822,1000 830,930 838,930 845,940 852,900 865,850 875,880 882,890 888,760 893,800 897,700 903,870 910,950 918,1120 924,1180 930,1165 937,1180 950,1130 960,1150 967,1110 973,1130 983,930 988,1010 995,900 1002,920 1012,790 1020,850 1027,700 1033,700 1040,1020 1050,1150 1055,1020 1065,930 1073,834" },
      { c: RED, raw: true, d: "730,700 736,1050 742,1080 748,700 784,700 790,1000 796,700 858,1100 864,700 910,1120 930,700 935,1170 955,1130 965,700 985,1160 1010,1150 1040,700 1062,1150 1080,700 1085,1150 1100,1180 1110,1180 1124,850" },
    ],
  },
  {
    title: "EpRet/Std", left: 41.1, frame: [160, 1389, 650, 412.5], x: [-20, 200], xGrid: 20, xLabel: 40,
    y: [-50, 500], yGrid: 50, yLabels: [100, 200, 300, 400],
    lines: [
      { c: RED, n: 3, d: "337,1560 341,1470 346,1408 349,1440 355,1380 375,1380 380,1465 386,1380 398,1560 412,1560 420,1380 428,1400 432,1410 441,1560 450,1520 460,1420 468,1380 474,1400 477,1380 490,1380 495,1480 500,1540 507,1480 513,1440 520,1560" },
      { c: RED, dot: true, d: "710,1560 715,1420 718,1390 722,1480" },
      { c: BLUE, n: 3, d: "453,1560 458,1510 465,1495 472,1485 480,1540 487,1500 497,1460 505,1440 513,1380 520,1440 524,1450 530,1480 540,1390 546,1370 556,1445 562,1405 572,1560" },
      { c: BLUE, dot: true, n: 3, d: "590,1560 598,1450 606,1410 613,1460 620,1490 628,1430 634,1440 640,1560 650,1400 655,1370 661,1500 669,1540 674,1470 680,1437" },
    ],
  },
];

const chartsD: ChartSpec[] = [
  {
    title: "EpCosts/Max", left: 40.9, frame: [769, 263, 518, 432], x: R500, xGrid: 50, xLabel: 100,
    y: [80, 120], yGrid: 5, yLabels: [85, 95, 105, 115],
    lines: [
      { c: RED, dot: true, n: 5, d: "815,690 821,690 825,263 830,250 835,560 840,620 844,360 847,540 852,290 857,450 862,350 866,690 871,300 878,690 884,400 888,360 893,640 898,340 905,680 911,330 918,700 924,420 930,660 936,430 942,680 948,490 953,640 955,650 958,482" },
      { c: BLUE, dot: true, n: 5, d: "822,690 825,250 830,380 835,320 840,480 845,530 850,350 855,400 859,460 864,370 868,410 873,300 876,250 886,330 892,250 897,330 902,300 905,380 908,250 912,585 917,330 921,280 925,440 930,480 935,370 939,450 942,630 947,427" },
    ],
  },
  {
    title: "EpCosts/Mean", left: 41.1, bottom: 177.4, frame: [122, 312, 565, 520], x: [-20, 200], xGrid: 20, xLabel: 20,
    y: [10, 100], yGrid: 10, yLabels: [20, 40, 60, 80],
    lines: [
      { c: GREY, dot: true, n: 1, d: "176,540 180,620 188,655 200,665 212,668 225,690 235,712 245,760 255,810 265,830 272,800 280,720 290,688 300,690 313,720 323,770 332,817 340,800 350,715 360,695 370,692 380,740 390,790 400,803 410,720 418,712 428,770 440,730 452,715 465,720 475,750 490,740 500,765 512,710 525,708 535,745 545,770 560,735 573,728 583,740 597,770 605,772 613,730 620,705 630,705 638,725 643,770 650,795 656,791" },
      { c: TEAL, dot: true, n: 1, d: "176,590 180,630 184,657 197,657 207,690 222,705 228,680 240,675 250,695 262,740 270,780 280,820 290,830 297,790 305,740 317,722 325,710 333,770 343,787 350,750 358,737 366,770 372,790 380,760 390,725 400,718 407,760 415,745 425,753 440,745 450,740 458,760 468,740 475,768 487,725 497,770 505,760 515,725 525,770 535,760 546,720 552,765 565,745 578,760 588,735 595,760 600,725 608,790 615,762" },
      { c: PINK, dot: true, n: 2, d: "180,832 188,795 196,775 206,753 213,760 222,757 232,760 240,757 248,770 253,788 260,770 272,765 280,775 290,765 300,770 312,785 330,787 345,780 360,775 380,772 400,775 420,772 435,778 455,778 475,775 490,768 505,770 518,775 530,765 545,765 560,775 582,776" },
      { c: CYAN, dot: true, n: 1, d: "183,832 188,800 196,785 206,783 215,770 232,765 245,752 262,753 272,770 283,770 295,788 305,785 318,775 335,772 350,785 370,790 385,770 400,762 412,772 430,758 440,765 465,775 480,778 500,775 520,782 535,788 560,790 580,776" },
      { c: RED, dot: true, d: "183,832 189,620 194,570 202,550 206,500 212,400 218,325 222,315 228,340 236,410 244,430 249,495 253,498 260,400 267,340 273,420 281,495 287,400 294,347 300,380 308,460 313,440 320,338 326,370 330,500 335,545 341,440 347,305 354,305 360,440 366,520 371,550 377,490 385,350 391,305 397,320 403,400 410,460 418,475 424,440 432,335 440,360 447,460 455,485 462,400 469,330 476,400 483,470 490,485 498,400 506,367 515,395 522,455 528,465 538,345 545,380 552,460 558,485 565,390 572,370 580,440 593,463 601,440 608,410" },
      { c: BLUE, dot: true, d: "180,832 186,690 191,600 196,500 202,380 208,350 215,335 222,370 228,450 232,500 238,400 245,370 252,378 260,440 267,463 274,440 280,405 287,385 295,390 303,425 310,440 318,425 326,413 335,425 345,435 355,430 362,420 372,380 380,410 390,435 397,420 404,380 411,430 418,445 426,400 433,365 441,430 447,445 451,300 455,305 461,450 470,520 476,490 482,430 490,370 497,345 505,390 512,430 518,445 526,400 537,375 545,400 551,460 559,485 566,430 574,380" },
    ],
  },
  {
    title: "EpCosts/Min", left: 30.8, frame: [767, 312, 586, 512], x: R500, xGrid: 50, xLabel: 50,
    y: [35, 80], yGrid: 5, yLabels: [40, 50, 60, 70],
    lines: [
      { c: GREY, n: 8, d: "816,720 820,832 824,800 828,832" },
      { c: TEAL, n: 8, d: "817,800 820,835 824,810 828,840" },
      { c: RED, dot: true, n: 5, d: "828,840 830,840 834,500 837,412 842,485 846,800 850,540 855,800 860,463 865,600 868,420 873,340 878,660 883,305 888,500 892,660 898,305 902,600 906,630 910,455 915,600 920,460 925,500 930,400 937,530 942,425 948,480 954,390 960,500 966,420 970,490 975,590 978,595 980,521" },
      { c: BLUE, dot: true, n: 6, d: "858,840 862,600 867,720 872,680 878,810 884,660 890,640 895,570 900,615 905,550 912,590 917,480 920,625 922,365 925,840 930,840 935,640 940,690 943,590 947,670 951,450 955,400 960,690 964,700 967,426" },
    ],
  },
  epCostStd,
];

const H000 = "Hopper-v3/focops/seed-000-2022-08-29__08-03-31/tb";
const M000 = "Humanoid-v3/focops/seed-000-2022-08-29__07-38-43/tb";
const S000 = "Swimmer-v3/focops/seed-000-2022-08-29__08-03-12/tb";
const H005 = "Hopper-v3/focops/seed-005-2022-08-29__12-08-58/tb";
const H010 = "Hopper-v3/focops/seed-010-2022-08-29__12-09-56/tb";
const M005 = "Humanoid-v3/focops/seed-005-2022-08-29__12-10-11/tb";
const M010 = "Humanoid-v3/focops/seed-010-2022-08-29__12-10-16/tb";
const S005 = "Swimmer-v3/focops/seed-005-2022-08-29__12-10-23/tb";
const S010 = "Swimmer-v3/focops/seed-010-2022-08-29__12-10-29/tb";

const rowsA: Row[] = [
  [ORANGE, H000, "83.58", "83.32", "500", "Mon Aug 29, 11:07:17", "3h 3m 29s"],
  [PINK, M000, "20.99", "21.2", "500", "Mon Aug 29, 10:58:06", "3h 18m 57s"],
  [GREY, S000, "24.34", "25.06", "500", "Mon Aug 29, 10:51:53", "2h 48m 30s"],
];
const rowsB: Row[] = [
  [ORANGE, H000, "2020", "2039", "500", "Mon Aug 29, 11:07:17", "3h 3m 29s"],
  [PINK, M000, "4415", "4449", "500", "Mon Aug 29, 10:58:06", "3h 18m 57s"],
  [GREY, S000, "47.45", "48.54", "500", "Mon Aug 29, 10:51:53", "2h 48m 30s"],
];
const rowsC: Row[] = [
  [BLUE, H005, "2450", "2656", "156", "Mon Aug 29, 16:22:08", "4h 12m 59s"],
  [RED, H010, "1861", "2012", "170", "Mon Aug 29, 16:22:11", "4h 12m 4s"],
  [CYAN, M005, "754.1", "754.2", "159", "Mon Aug 29, 16:22:26", "4h 11m 23s"],
  [PINK, M010, "640", "641.5", "160", "Mon Aug 29, 16:22:11", "4h 10m 38s"],
  [TEAL, S005, "31.88", "35.63", "173", "Mon Aug 29, 16:22:43", "4h 11m 38s"],
  [GREY, S010, "26.88", "33.55", "189", "Mon Aug 29, 16:22:31", "4h 11m 0s"],
];
const rowsD: Row[] = [
  [BLUE, H005, "88.14", "91.95", "156", "Mon Aug 29, 16:22:08", "4h 12m 59s"],
  [RED, H010, "82.86", "85.27", "169", "Mon Aug 29, 16:21:21", "4h 11m 14s"],
  [CYAN, M005, "19.83", "20.12", "158", "Mon Aug 29, 16:21:40", "4h 10m 37s"],
  [PINK, M010, "19.89", "20.52", "159", "Mon Aug 29, 16:21:44", "4h 10m 11s"],
  [TEAL, S005, "22.32", "21.97", "172", "Mon Aug 29, 16:21:57", "4h 10m 51s"],
  [GREY, S010, "17.31", "19.8", "188", "Mon Aug 29, 16:21:46", "4h 10m 15s"],
];

const mainClass = "relative flex min-w-0 flex-1 flex-col bg-white";
const bottomShade =
  "absolute bottom-0 z-10 bg-linear-to-t from-black/13 via-black/4 to-transparent mask-x-from-85% mask-x-to-100%";

export default function App() {
  return (
    <div className="h-[2255px] w-[4096px] overflow-hidden bg-white font-['Roboto',sans-serif]">
      <div className="flex h-[2392px] w-[4345px] [zoom:0.942693]">
        <div className="w-[2145px] shrink-0">
          <div className="relative h-[1030px] overflow-hidden">
            <div className="absolute top-0 z-30 h-[7px] w-full border-b-[2.2px] border-[#d0d0d0] bg-white shadow-[0_1px_4px_rgba(0,0,0,0.2)]" />
            <div className="flex h-[711.8px] [zoom:1.447]">
              <Sidebar runs={seed000} width="w-[344.6px]" pad="pl-[12.2px]" top="h-[145.4px]" listOffset="-mt-[20px]" />
              <div className={mainClass}>
                <Body specs={prevA} className="h-[71.2px] justify-end border-b" />
                <Header name="EpCosts" count={4} open className="mt-[0.7px] h-[44.8px] pr-[3.5px]" />
                <Body specs={chartsA} />
                <Tooltip rows={rowsA} near={0} className="top-[399.8px] left-[363.3px]" />
                <div className={`${bottomShade} left-[22px] h-[24px] w-[740px]`} />
              </div>
            </div>
          </div>
          <div className="h-[750px] overflow-hidden">
            <div className="flex h-[530.4px] overflow-hidden [zoom:1.414]">
              <Sidebar runs={seed000.slice(1)} width="w-[363.2px]" pad="pl-[30.6px]" top="h-[72.3px]" listOffset="mt-[3px]" thumb={false} />
              <div className={mainClass}>
                <Header name="EpLen" count={3} className="h-[31.9px] pr-[18.4px]" />
                <Header name="EpRet" count={4} open className="h-[45px] pr-[18.4px]" />
                <Body specs={chartsB} />
                <Tooltip rows={rowsB} near={2} className="top-[360px] left-[364px]" />
              </div>
            </div>
          </div>
        </div>

        <div className="ml-[55px] w-[2145px] shrink-0 pt-[57px]">
          <div className="h-[919px] overflow-hidden">
            <div className="flex h-[643.8px] overflow-hidden [zoom:1.4275]">
              <Sidebar runs={seed005} width="w-[352.4px]" pad="pl-[20.5px]" top="h-[72.2px]" listOffset="-mt-[22.4px]" />
              <div className={mainClass}>
                <Body specs={[epCostStd]} className="h-[140.4px] justify-end border-b" />
                <Header name="EpLen" count={3} className="mt-[0.8px] h-[45px] pr-[15.7px]" />
                <Header name="EpRet" count={4} open className="h-[45px] pr-[15.7px]" />
                <Body specs={chartsC} />
                <Tooltip rows={rowsC} near={1} className="top-[85.6px] left-[363.3px]" />
                <div className={`${bottomShade} left-[40px] h-[32px] w-[730px]`} />
              </div>
            </div>
          </div>
          <div className="relative h-[877px] overflow-hidden">
            <div className="absolute top-0 z-30 h-[2.4px] w-full bg-linear-to-r from-[#555] from-22% via-black via-24% to-[#5a2018]" />
            <div className="flex h-[616.7px] overflow-hidden [zoom:1.422]">
              <Sidebar runs={seed005} width="w-[361.8px]" pad="pl-[29.8px]" top="h-[87px]" listOffset="-mt-[22.4px]" />
              <div className={mainClass}>
                <Header name="EpCosts" count={4} open className="h-[34.2px] pr-[14px]" />
                <Body specs={chartsD} />
                <Tooltip rows={rowsD} near={5} className="top-[316px] left-[362.6px]" />
              </div>
            </div>
          </div>
          <p className="mt-[97px] ml-[179px] font-['Liberation_Serif',serif] text-[82.5px] leading-[98.9px] whitespace-nowrap text-black">
            Other two seeds are currently running, We usually use
            <br />
            five seed, but now the computing resources are
            <br />
            insufficient, we just use other two seeds to present
            <br />
            results.
          </p>
        </div>
      </div>
    </div>
  );
}
